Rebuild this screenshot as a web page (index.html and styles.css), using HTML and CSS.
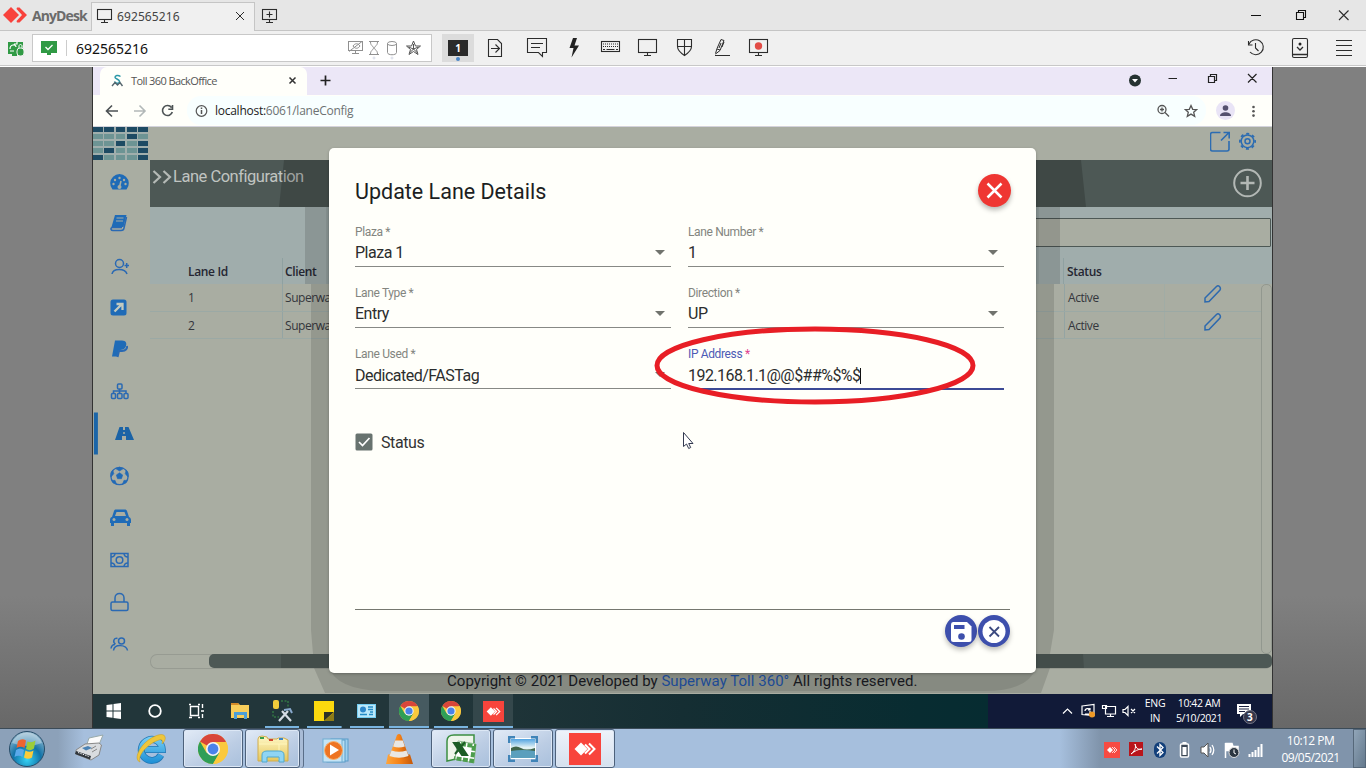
FILE: index.html
```html
<!DOCTYPE html>
<html lang="en">
<head>
<meta charset="utf-8">
<title>AnyDesk - 692565216</title>
<link rel="stylesheet" href="styles.css">
</head>
<body>
<svg class="defs" width="0" height="0" aria-hidden="true">
  <defs>
    <linearGradient id="paper" x1="0" y1="0" x2="0" y2="1"><stop offset="0" stop-color="#fff8c8"/><stop offset="1" stop-color="#e6c75b"/></linearGradient>
    <linearGradient id="sky" x1="0" y1="0" x2="0" y2="1"><stop offset="0" stop-color="#4a9fe0"/><stop offset=".45" stop-color="#e4f3f5"/><stop offset="1" stop-color="#c2dfe6"/></linearGradient>
    <radialGradient id="orb" cx=".5" cy=".8" r=".8"><stop offset="0" stop-color="#35d3f5"/><stop offset=".5" stop-color="#1173a8"/><stop offset="1" stop-color="#9fbfd2"/></radialGradient>
    <linearGradient id="ie" gradientUnits="userSpaceOnUse" x1="0" y1="734" x2="0" y2="762"><stop offset="0" stop-color="#7fd4f7"/><stop offset="1" stop-color="#1d8fd6"/></linearGradient>
    <linearGradient id="cone" x1="0" x2="1"><stop offset="0" stop-color="#ffa63c"/><stop offset=".5" stop-color="#f58218"/><stop offset="1" stop-color="#c4580a"/></linearGradient>
    <symbol id="chrome" viewBox="0 0 30 30">
      <circle cx="15" cy="15" r="15" fill="#fbc93d"/>
      <path d="M15 15 L2 7.5 A15 15 0 0 1 28 7.5 Z" fill="#d8453a"/>
      <path d="M2 7.5 A15 15 0 0 0 15 30 L21.5 18.7 L8.5 18.7 Z" fill="#2f9e57"/>
      <path d="M15 8 H28.2 A15 15 0 0 1 15 30 L21.5 18.7 Z" fill="#fbc93d"/>
      <circle cx="15" cy="15" r="7" fill="#f4f4f4"/><circle cx="15" cy="15" r="5.4" fill="#4a82ea"/>
    </symbol>
    <symbol id="adesk" viewBox="0 0 32 32">
      <rect width="32" height="32" fill="#f8443c"/>
      <path d="M5.500 16 L12 9.500 L18.500 16 L12 22.500Z" fill="#fff"/>
      <path d="M16 11.500 L20.500 16 L16 20.500 M20 10.500 L25.500 16 L20 21.500" fill="none" stroke="#fff" stroke-width="2"/>
    </symbol>
  </defs>
</svg>

<header class="titlebar">
  <div class="brand">
    <svg width="28" height="30" viewBox="0 0 28 30"><path d="M3 15 L11 7 L19 15 L11 23Z" fill="#f8423c"/><path d="M17 7.500 L19.500 7.500 L27 15 L19.500 22.500 L17 22.500 L16.500 21 L22 15 L16.500 9Z" fill="#f8423c"/></svg>
    <b>AnyDesk</b>
  </div>
  <div class="desk-tab">
    <svg width="25" height="28" viewBox="92 3 25 28" class="ln"><rect x="97.500" y="9.500" width="14" height="10"/><path d="M104.500 20v2M101 22.500h7"/></svg>
    <span>692565216</span>
    <svg width="14" height="28" viewBox="233 3 14 28" class="ln thin"><path d="M236 12l8 8M244 12l-8 8"/></svg>
  </div>
  <svg width="30" height="30" viewBox="255 0 30 30" class="ln"><rect x="262.500" y="9.500" width="14" height="10"/><path d="M269.500 20v2M266 22.500h7M269.500 11.500v6M266.500 14.500h6"/></svg>
  <div class="push"></div>
  <svg width="126" height="30" viewBox="1240 0 126 30" class="ln"><path d="M1251 15.500h10M1296.500 12.500h7v7h-7zM1298.500 12v-1.500h7v7h-2" stroke="#111"/><path d="M1339 10.500l9.500 9.500M1348.500 10.500l-9.500 9.500"/></svg>
</header>

<div class="toolbar">
  <svg width="32" height="34" viewBox="0 31 32 34"><path d="M8 42h15v11h-6v3h-5v-2h-4z" fill="#309a45"/><path d="M10 49c0-5 6-5 6-2m-2-3h3v-2M10 51h4" fill="none" stroke="#fff" stroke-width="1.200"/><rect x="17" y="48" width="7" height="8" rx="3" fill="#309a45" stroke="#eee"/><path d="M19 48v-2c0-2 3-2 3 0v2" fill="none" stroke="#fff"/></svg>
  <div class="address">
    <svg width="43" height="26" viewBox="33 35 43 26"><path d="M41 41h16v12h-6v2h-4v-2h-6z" fill="#309a45"/><path d="M45.500 47l2.500 2.500 4.500-4.500" fill="none" stroke="#fff" stroke-width="1.300"/><path d="M66.500 40v16" stroke="#ccc"/></svg>
    <span>692565216</span>
    <div class="push"></div>
    <svg width="91" height="26" viewBox="340 35 91 26" fill="none" stroke="#909090"><rect x="348.500" y="41.500" width="14" height="9"/><path d="M355.500 51v2M352 53.500h7M349 51.500l13-10M353 46c2-3 5-3 7 0-2 3-5 3-7 0M369 41.500h10M369 54.500h10M370.500 42c0 4 3 4 3 6s-3 2-3 6M377.500 42c0 4-3 4-3 6s3 2 3 6"/><ellipse cx="392" cy="43.500" rx="4.500" ry="2"/><path d="M387.500 43.500v9c0 3 9 3 9 0v-9"/><path d="M413.500 41l2 5h5l-4 3.500 1.500 5-4.500-3-4.500 3 1.500-5-4-3.500h5z M413.500 44v5l-4 4M413.500 49l4 4M413.500 49l-5-2M413.500 49l5-2" stroke="#555"/><circle cx="374" cy="58" r="1" stroke="#d8dce8"/><circle cx="392" cy="58" r="1" stroke="#d8dce8"/></svg>
  </div>
  <div class="display-btn"><b>1</b><i></i></div>
  <svg width="320" height="34" viewBox="474 31 320 34" class="ln">
    <path d="M488.500 39.500h9l4 4v13h-13zM491 48.500h8M495.500 44.500l4 4-4 4"/>
    <path d="M527.500 38.500h19v14h-4v4l-4-4h-11zM531 43.500h12M531 47.500h9"/>
    <path d="M573 38h4l-2.500 7.500h4.500l-7.500 12 2-9.500h-4z" fill="#222" stroke="none"/>
    <rect x="601.500" y="41.500" width="18" height="10"/><path d="M603 44h15M603 46.500h15" stroke-dasharray="1 1"/><path d="M603 49.500h2M606.500 49.500h8M616 49.500h2"/>
    <rect x="638.500" y="39.500" width="18" height="13"/><path d="M647.500 53v2M644 55.500h7"/>
    <path d="M677.500 39.500h14v7c0 4-4 7-7 9-3-2-7-5-7-9zM684.500 40v15M678 46.500h13"/>
    <path d="M715.500 53.500l1.500-5 4-9 3 1-4 10-4.500 3.500M717 49l3 1M721 43l-2 5M724 42l-2 5M715 55.500h15" stroke-width="1"/>
    <rect x="749.500" y="39.500" width="18" height="13"/><path d="M758.500 53v2M755 55.500h7"/><circle cx="758.500" cy="46" r="3.700" fill="#e24c46" stroke="none"/>
  </svg>
  <div class="push"></div>
  <svg width="126" height="34" viewBox="1240 31 126 34" class="ln">
    <path d="M1249 44a7.500 7.500 0 1 1 1 8M1248.500 41v4h4M1255.500 43v5l3 3"/>
    <rect x="1292.500" y="38.500" width="15" height="19" rx="1.500"/><path d="M1293 54.500h15M1297 47l3 3 3-3" stroke-width="1.300"/><circle cx="1300" cy="44" r="1.500" fill="#222" stroke="none"/>
    <path d="M1336 40.500h16M1336 45.500h16M1336 50.500h16M1336 55.500h16"/>
  </svg>
</div>

<main class="stage">
  <div class="remote">
    <div class="tabs">
      <div class="tab">
        <svg width="31" height="28" viewBox="100 67 31 28" fill="none"><path d="M120.500 76.500c-2.500-2-5.500-1-5.500.800s4.500 1.700 4.500 4.200-4 2-5 0" stroke="#2b98a8" stroke-width="1.500"/><path d="M112 86l3-3.500 2.500 2.500 2.500-2.500 2.500 3.500" stroke="#54656d" stroke-width="1.400"/></svg>
        <span>Toll 360 BackOffice</span>
        <svg width="20" height="28" viewBox="283 67 20 28" fill="none" stroke="#333" stroke-width="1.500"><path d="M289.500 77.500l6 6M295.500 77.500l-6 6"/></svg>
      </div>
      <svg width="40" height="28" viewBox="307 67 40 28" fill="none" stroke="#222" stroke-width="1.700"><path d="M320.500 80.500h10M325.500 75.500v10"/></svg>
      <div class="push"></div>
      <svg width="152" height="28" viewBox="1120 67 152 28" fill="none" stroke="#222" stroke-width="1.200"><circle cx="1135" cy="80.500" r="6" fill="#263332" stroke="none"/><path d="M1132 79h6l-3 3.500z" fill="#fff" stroke="none"/><path d="M1168.500 78.500h8.500M1208.500 76.500h6v6h-6zM1210.500 76v-1.500h6v6h-2M1248 74l8.500 8.500M1256.500 74l-8.500 8.500"/></svg>
    </div>
    <div class="urlbar">
      <svg width="94" height="31" viewBox="93 95 94 31" fill="none" stroke="#4c5254" stroke-width="1.600"><path d="M118 111h-11M112 105.500l-5.500 5.500 5.500 5.500"/><path d="M134 111h11M139.500 105.500l5.500 5.500-5.500 5.500" stroke="#b2b8b8"/><path d="M171.500 107.500a5 5 0 1 0 .800 4.500M172.500 105v4.200h-4.200"/></svg>
      <div class="omnibox">
        <svg width="28" height="29" viewBox="187 96 28 29" fill="none" stroke="#555" stroke-width="1.200"><circle cx="201.500" cy="111" r="5.300"/><path d="M201.500 110v4M201.500 107.500v1.500" stroke-width="1.500"/></svg>
        <span>localhost:<em>6061/laneConfig</em></span>
        <div class="push"></div>
        <svg width="59" height="29" viewBox="1147 96 59 29" fill="none" stroke="#555" stroke-width="1.300"><circle cx="1162" cy="109.500" r="4"/><path d="M1165 112.500l4 4M1160 109.500h4M1162 107.500v4M1191 105.500l1.700 3.800 4 .300-3 2.700 1 4-3.700-2.200-3.700 2.200 1-4-3-2.700 4-.300z"/></svg>
      </div>
      <svg width="66" height="31" viewBox="1206 95 66 31"><circle cx="1225.500" cy="110.500" r="9.500" fill="#e9e4f6"/><circle cx="1225.500" cy="108" r="2.800" fill="#55516f"/><path d="M1220 116c0-5 11-5 11 0z" fill="#55516f"/><g fill="#555"><circle cx="1253.500" cy="107" r="1.300"/><circle cx="1253.500" cy="111.300" r="1.300"/><circle cx="1253.500" cy="115.600" r="1.300"/></g></svg>
    </div>

    <div class="app">
      <nav class="side">
        <div class="mosaic">
          <i class="d"></i><i class="d"></i><i class="d"></i><i class="d"></i><i class="d"></i>
          <i></i><i></i><i></i><i class="d"></i><i></i>
          <i></i><i></i><i class="d"></i><i></i><i class="d"></i>
          <i></i><i class="d"></i><i></i><i></i><i class="d"></i>
          <i class="d"></i><i></i><i></i><i></i><i class="d"></i>
        </div>
        <svg width="57" height="534" viewBox="93 160 57 534" fill="none" stroke="#2a69b3" stroke-width="1.500">
          <path d="M112.500 189.500a9.300 9.300 0 1 1 14 0z" fill="#1f6bb7" stroke="none"/><g fill="#a9ada2" stroke="none"><circle cx="113.500" cy="184" r="1.200"/><circle cx="115" cy="180" r="1.200"/><circle cx="119.500" cy="178" r="1.200"/><circle cx="124" cy="180" r="1.200"/><circle cx="125.500" cy="184" r="1.200"/><circle cx="119.500" cy="187" r="2"/></g><path d="M119.500 187l1.500-6" stroke="#a9ada2"/>
          <path d="M115 215h11.500l-3 12h-12z" fill="#1f6bb7" stroke="none"/><path d="M126.500 217l-2.500 11c-.200 2-2 2.500-3 2.500h-8c-2 0-3-2-1-3h10"/><path d="M116.500 218h7M116 221h7" stroke="#a9ada2" stroke-width="1"/>
          <circle cx="119.500" cy="263.500" r="4"/><path d="M112 274c1-6 13-6 15 0M124.500 265.500h4.500M126.700 263v5"/>
          <rect x="110.500" y="299.500" width="16" height="16" rx="2.500" fill="#1f6bb7" stroke="none"/><path d="M114.500 311.500l7-7M116.500 304h6v6" stroke="#c3cabf" stroke-width="2.300"/>
          <path d="M115 340.500h7c4 0 5 3 4 5.500-1 3-3 4-7 4l-1 6.500h-6z" fill="#1f6bb7" stroke="none"/><path d="M117.500 357l1.500-6h3c4 0 5.500-3 5-5" stroke-width="2"/>
          <rect x="117.500" y="384" width="4.500" height="5" rx="1"/><rect x="111.500" y="393.500" width="4" height="5" rx="1"/><rect x="117.500" y="393.500" width="4.500" height="5" rx="1"/><rect x="124" y="393.500" width="4" height="5" rx="1"/><path d="M119.500 389v5M113.500 393v-2h12.500v2"/>
          <path d="M95.900 412.500v42" stroke="#1b65a8" stroke-width="4"/>
          <path d="M119.500 427h3.500v3h2v-3h3.500l5.500 13h-8v-4h-4v4h-7z" fill="#1b63a6" stroke="none"/><path d="M124 432v2" stroke="#a9ada2"/>
          <circle cx="119.500" cy="476" r="8.700" stroke-width="1.300"/>
          <path d="M119.500 472.700l3.200 2.300-1.200 3.700h-4l-1.200-3.700zM115.500 468.500l4 2.500 4-2.500-4-1.300zM111 477l2.800-3.300-1-3.700-1.500 2zM128 477l-2.800-3.300 1-3.700 1.500 2zM116.700 484.500l-1.700-4.200-3.500.2 1.500 2.500zM122.300 484.500l1.700-4.200 3.500.2-1.500 2.500z" fill="#1f6bb7" stroke-width=".6"/>
          <path d="M112 517l2-6c.500-1.500 1-1.500 2-1.500h9c1 0 1.500.500 2 1.500l2 6c2 1 2 2 2 4v2h-1v3h-3v-3h-13v3h-3v-3h-1v-3c0-2 1-3 2-3z" fill="#1f6bb7" stroke="none"/><path d="M115 516l1.500-4h8l1.500 4z" fill="#a9ada2" stroke="none"/><g fill="#a9ada2" stroke="none"><circle cx="114" cy="519.500" r="1.500"/><circle cx="127" cy="519.500" r="1.500"/></g>
          <rect x="111" y="553.500" width="17" height="13"/><circle cx="119.500" cy="560" r="3.300"/><path d="M111 557c3 0 4-1 4-4M128 557c-3 0-4-1-4-4M111 563c3 0 4 1 4 4M128 563c-3 0-4 1-4 4"/>
          <rect x="111" y="602" width="17" height="8.500" rx="1.500"/><path d="M115 602v-4c0-6 9-6 9 0v4"/>
          <circle cx="121.500" cy="641" r="3"/><path d="M113.500 650.500c1-7 13-6 14 0M117.500 638.500c-4-1-5 4-2 5.500M111 648.500c.500-3 2-4 4-4"/>
        </svg>
      </nav>
      <section class="content">
        <div class="apphead">
          <svg width="62" height="33" viewBox="1210 127 62 33" fill="none" stroke="#2c6cb2" stroke-width="1.600"><path d="M1220.500 132.500h-8c-1.500 0-2 1-2 2v14.500c0 1.500 1 2 2 2h14.500c1.500 0 2-1 2-2v-8M1221 140.500l8-8M1223.500 132.500h5.700v6"/><circle cx="1247.500" cy="141.300" r="6.300" stroke-width="1.400"/><circle cx="1247.500" cy="141.300" r="7.600" stroke-width="1.800" stroke-dasharray="2.984 2.984" stroke-dashoffset="1.500"/><circle cx="1247.500" cy="141.300" r="2.500" stroke-width="1.500"/></svg>
        </div>
        <div class="pagebar">
          <svg width="23" height="47" viewBox="150 160 23 47" fill="none" stroke="#b5bab6" stroke-width="2.200"><path d="M153.500 171l6.500 6-6.500 6M163.500 171l6.500 6-6.500 6"/></svg>
          <h1>Lane Configuration</h1>
          <div class="push"></div>
          <svg width="50" height="47" viewBox="1222 160 50 47" fill="none" stroke="#b3b8b5" stroke-width="2"><circle cx="1247.500" cy="183" r="13.300"/><path d="M1240.500 183h14M1247.500 176v14" stroke-width="2.600"/></svg>
        </div>
        <div class="filter"><div class="search"></div></div>
        <div class="thead"><span>Lane Id</span><span>Client</span><span>Status</span></div>
        <div class="tbody">
          <div class="rows">
            <div class="row"><span>1</span><span>Superway</span><span>Active</span><svg width="20" height="20" viewBox="0 0 20 20"><path d="M2 18v-4L13.500 2.500q1.500-1.500 3 0t.500 3.500L6 17.500z"/></svg></div>
            <div class="row"><span>2</span><span>Superway</span><span>Active</span><svg width="20" height="20" viewBox="0 0 20 20"><path d="M2 18v-4L13.500 2.500q1.500-1.500 3 0t.500 3.500L6 17.500z"/></svg></div>
          </div>
          <div class="vscroll"></div>
        </div>
        <div class="hscroll"><i></i></div>
      </section>

      <svg class="shade" width="1179" height="567" viewBox="93 127 1179 567">
        <path d="M284 160H1081L1086 207H279z" opacity=".18"/>
        <path d="M305 207H1060V284H305z" opacity=".13"/>
        <path d="M311 284H1054V630L1050 654H1083L1084 668H1050L1041 693H325L314 668H281V654H313L311 630z" opacity=".12"/>
        <path d="M329 668H1036Q1028 691 985 691H380Q337 689 329 668z" opacity=".09"/>
        <path d="M326 207H1039V284H326z" opacity=".05"/>
      </svg>
      <p class="copyright">Copyright © 2021 Developed by <a>Superway Toll 360°</a> All rights reserved.</p>

      <div class="modal">
        <div class="modal-head">
          <h2>Update Lane Details</h2>
          <button class="close"><svg width="33" height="33" viewBox="0 0 33 33"><path d="M9.500 9.500l14 14M23.500 9.500l-14 14" stroke="#fff" stroke-width="2.500"/></svg></button>
        </div>
        <div class="form">
          <div class="field"><label>Plaza *</label><div class="val">Plaza 1<i class="caret"></i></div></div>
          <div class="field"><label>Lane Number *</label><div class="val">1<i class="caret"></i></div></div>
          <div class="field"><label>Lane Type *</label><div class="val">Entry<i class="caret"></i></div></div>
          <div class="field"><label>Direction *</label><div class="val">UP<i class="caret"></i></div></div>
          <div class="field"><label>Lane Used *</label><div class="val"><span class="clip">Dedicated/FASTag</span><i class="caret"></i></div></div>
          <div class="field focus"><label>IP Address <em>*</em></label><div class="val"><span class="clip ip">192.168.1.1@@$##%$%$</span><i class="cursor"></i></div></div>
        </div>
        <div class="check"><svg width="18" height="18" viewBox="0 0 18 18"><rect x=".5" y=".5" width="17" height="17" rx="1.500" fill="#68736f"/><path d="M4 9l3.500 3.500L14.500 5" fill="none" stroke="#fff" stroke-width="1.700"/></svg><span>Status</span></div>
        <div class="modal-foot">
          <button><svg width="32" height="32" viewBox="945 615 32 32"><path d="M953 622h14l4.500 4.500v13q0 2.500-2.500 2.500h-15.500q-2.500 0-2.500-2.500V624.500q0-2.500 2-2.500z" fill="#fff"/><rect x="954" y="625" width="10.500" height="4" fill="#3d4fac"/><circle cx="961.500" cy="636.500" r="3.300" fill="#3d4fac"/></svg></button>
          <button><svg width="32" height="32" viewBox="978 615 32 32"><circle cx="994" cy="631.500" r="11.500" fill="#fff"/><path d="M989.500 627l9.500 9.500M999 627l-9.500 9.500" stroke="#3c4a80" stroke-width="1.800"/></svg></button>
        </div>
      </div>
      <svg class="marker" width="330" height="90" viewBox="650 320 330 90"><ellipse cx="815" cy="365.500" rx="158" ry="36.500" fill="none" stroke="#e81e25" stroke-width="5"/></svg>
      <svg class="pointer" width="14" height="20" viewBox="682 431 14 20"><path d="M683.500 432.500v14l3-2.500 2.200 4.500 2-1-2-4h4.300z" fill="#fff" stroke="#333a50"/></svg>
    </div>

    <div class="win10">
      <svg width="126" height="34" viewBox="93 694 126 34" fill="none" stroke="#fff"><path d="M106.500 705l6-.800v6.300h-6zM113.500 704l7.500-1v7.500h-7.500zM106.500 711.500h6v6.300l-6-.800zM113.500 711.500h7.500v7.500l-7.500-1z" fill="#fff" stroke="none"/><circle cx="155" cy="711" r="5.800" stroke-width="1.800"/><path d="M190.500 706.500h8v9h-8zM189 704.500h2M198 704.500h2M189 717.500h3M198 717.500h2M202.500 704v4M202.500 714v4M201 711h3" stroke-width="1.400"/></svg>
      <div class="app10"><svg width="20" height="18" viewBox="0 0 20 18"><path d="M1 1h7l2 2h9v13H1z" fill="#f7ce5b"/><path d="M1 1h7l1 2H1z" fill="#d38b28"/><path d="M4 17V10h13v7h-3v-4H7v4z" fill="#4b9fd8"/></svg></div>
      <div class="app10 run"><svg width="22" height="22" viewBox="0 0 22 22"><rect x="2" y="0" width="6" height="9" rx="2" fill="#f2cc3b"/><path d="M2 11v6h6M10 1h7v7" fill="none" stroke="#3a9448" stroke-dasharray="2 1.500"/><path d="M8 21l9-10M11 11l9 10" stroke="#d5dce4" stroke-width="2.200"/><path d="M13 10l6-1 2 4" stroke="#88a9cd" stroke-width="2" fill="none"/></svg></div>
      <div class="app10 run"><svg width="20" height="20" viewBox="0 0 20 20"><path d="M0 0h20v20H0z" fill="#fcd90e"/><path d="M10 20v-9h10z" fill="#2c3026"/><path d="M20 11v9H10z" fill="#8d7b17"/></svg></div>
      <div class="app10 run"><svg width="19" height="14" viewBox="0 0 19 14"><path d="M0 0h19v14H0z" fill="#74cdf2"/><path d="M1 1h17v12H1z" fill="#bbe8fa"/><circle cx="6" cy="5.500" r="3" fill="#2d86c9"/><path d="M11 3h5M11 5.500h5M3 10.500h7M12 10.500h4M13 8h3" stroke="#258bc5" stroke-width="1.500"/></svg></div>
      <div class="app10 run hot"><svg width="20" height="20"><use href="#chrome"/></svg></div>
      <div class="app10 run"><svg width="20" height="20"><use href="#chrome"/></svg></div>
      <div class="app10 run warm"><svg width="21" height="21"><use href="#adesk"/></svg></div>
      <div class="push"></div>
      <svg width="85" height="34" viewBox="1058 694 85 34" fill="none" stroke="#fff" stroke-width="1.200"><path d="M1063 713.500l4.500-4.500 4.500 4.500M1082 706l12-1.500v11l-12-1zM1085 711c0-3 5-3 5-1m0-2v2h-2M1090 711v3h-5M1105.500 706.500h10v7.500h-10zM1110.500 714v2.500M1107 716.500h7M1102.500 705.500h4v3h-4zM1123 709.500h2l3-3v9l-3-3h-2zM1131 709l4 4M1135 709l-4 4"/><circle cx="1092" cy="714.500" r="3" fill="#f09a26" stroke="none"/></svg>
      <div class="duo lang"><span>ENG</span><span>IN</span></div>
      <div class="duo clock10"><span>10:42 AM</span><span>5/10/2021</span></div>
      <div class="note"><svg width="24" height="22" viewBox="1236 702 24 22"><path d="M1237 704h14v10h-8l-3 3v-3h-3z" fill="#fff"/><path d="M1239 706.500h10M1239 709h10M1239 711.500h6" stroke="#1b2140"/><circle cx="1250" cy="717" r="6.500" fill="#35364a" stroke="#767888"/></svg><b>3</b></div>
    </div>
  </div>
</main>

<footer class="win7">
  <svg width="183" height="40" viewBox="0 728 183 40">
    <circle cx="27" cy="748" r="17.500" fill="url(#orb)" stroke="#274c68"/><path d="M12 742a16 16 0 0 1 30 0q-15 6-30 0z" fill="#fff" opacity=".35"/>
    <path d="M18 740q4-3 8-.500l-1.500 7.500q-4-2.500-8 0z" fill="#ee6430"/><path d="M27.500 740.500q4 2 8-1l-1.500 8q-4 3-8 .500z" fill="#9bcd3a"/><path d="M16 749q4-3 8 0l-1.500 7q-4-2.500-8 0z" fill="#5aa9ea"/><path d="M25.500 749.500q4 2.500 8 0l-1.500 7q-4 2.500-8 0z" fill="#fbcc3a"/>
    <path d="M89 737l14-3-5 12-12 0z" fill="#fbfbfb" stroke="#9aa"/><path d="M76 749l9-6 14-1 2.500 2-2.500 10-8 5-15-6z" fill="#d9dcdf" stroke="#888"/><path d="M75 753l15 5.500 1-3.500-15-5z" fill="#30363c"/><path d="M78 751.500l11 4" stroke="#eee" stroke-dasharray="1.500 1"/><path d="M82 747l6-2 4 2-6 2.500z" fill="#4b83b5"/><path d="M91 748l5-3M92 751l5-3" stroke="#888"/>
    <path d="M161 754A10.500 10.500 0 1 1 162.300 748.500H145" fill="none" stroke="#2277b4" stroke-width="7"/><path d="M161 754A10.500 10.500 0 1 1 162.300 748.500H145" fill="none" stroke="url(#ie)" stroke-width="5.500"/><path d="M140 761c-6-2-2-13 6-20 8-7 18-10 19-5 1 2-1 5-3 7 1-4 0-5-3-4-10 3-22 15-19 22z" fill="#eec63b" stroke="#c99b1e" stroke-width=".5"/>
  </svg>
  <div class="b7 w59"><svg width="30" height="30"><use href="#chrome"/></svg></div>
  <div class="b7 w55 stack"><svg width="32" height="30" viewBox="0 0 32 30"><path d="M1 5q0-3 4-3l5 1 1 2h9l1-1h6l4 2v21H1z" fill="url(#paper)" stroke="#d1ad4c"/><path d="M3 4h4" stroke="#3a9f4a" stroke-width="2"/><path d="M12 6h4" stroke="#d2462e" stroke-width="2"/><path d="M22 5h4" stroke="#3c87c9" stroke-width="2"/><path d="M2 10h28M22 10v16" stroke="#fff6bb"/><path d="M5 28V21q0-4 5-4h12q5 0 5 4v7h-5v-5H10v5z" fill="#8fd5f4" stroke="#4fa8cf"/></svg></div>
  <svg width="129" height="40" viewBox="302 728 129 40">
    <rect x="331" y="738" width="17" height="22" fill="#9fd0ee" stroke="#5a9cc8"/><rect x="327" y="739" width="18" height="22" fill="#b7def2" stroke="#5a9cc8"/><rect x="323" y="738" width="19" height="23" fill="#c5e4f5" stroke="#70add2"/><circle cx="333.500" cy="749.500" r="9" fill="#ee7422" stroke="#f8b06c"/><path d="M330 743.500v11l9-5.500z" fill="#fff"/>
    <path d="M388 753.500h22l3 9.500h-27z" fill="url(#cone)"/><path d="M397 734q2-2 4 0l8 22q-10 4-20 0z" fill="url(#cone)"/><path d="M395.200 739.500h7.600l2 6q-6 2-11.700 0zM391.500 749.500q7.500 2.500 15 0l2 5.500q-9.500 3.500-19 0z" fill="#e9e7e3"/>
  </svg>
  <div class="b7 w59"><svg width="31" height="30" viewBox="0 0 31 30"><path d="M1 27V7Q1 1 8 1h20v20z" fill="#eef5ea" stroke="#3c8f42" stroke-width="1.500"/><path d="M12 7l18 3-2 19-19-4z" fill="#fff" stroke="#90b892"/><path d="M15 10l13 2-2 15-18-3" fill="none" stroke="#4c9d4d" stroke-width="4" stroke-dasharray="5 1.500"/><path d="M8 9h5l8 12h-5zM19 8l-10 12" fill="#1c5d26" stroke="#1c5d26" stroke-width="2"/></svg></div>
  <div class="b7 w59 gap"><svg width="30" height="26" viewBox="0 0 30 26"><rect x="2.500" y="2.500" width="25" height="20" fill="url(#sky)" stroke="#fff"/><path d="M3 12q5-3 10 0t14 0v4H3z" fill="#41664c"/><path d="M3 15q12-2 24 0v7H3z" fill="#5b9fbd"/><path d="M1 7V1h6M23 1h6v6M29 19v6h-6M7 25H1v-6" fill="none" stroke="#4084b8" stroke-width="3"/></svg></div>
  <div class="b7 w59 gap lit"><svg width="32" height="32"><use href="#adesk"/></svg></div>
  <div class="push"></div>
  <svg width="176" height="40" viewBox="1100 728 176 40">
    <rect x="1104" y="741" width="16" height="16" fill="#f64b43"/><path d="M1107 749l3-3 3 3-3 3z" fill="#fff"/><path d="M1112 746l3 3-3 3M1114 746l3 3-3 3" fill="none" stroke="#fff" stroke-width=".800"/>
    <rect x="1129" y="741" width="14" height="14" fill="#b9151b"/><path d="M1131 753c5-4 5-8 4-10 1 5 4 6 7 5-4 0-7 2-11 5" fill="none" stroke="#fff"/>
    <rect x="1154" y="741" width="12" height="16" rx="6" fill="#123f7a"/><path d="M1157 745.500l6 6-3 3v-11l3 3-6 6" fill="none" stroke="#fff" stroke-width="1.300"/>
    <rect x="1180.500" y="743" width="8" height="13" rx="1" fill="#3c4856" stroke="#fff" stroke-width="1.500"/><path d="M1182.500 746h4v8h-4zM1182.500 741h4v2h-4z" fill="#fff"/>
    <path d="M1201 746h3l4-4v14l-4-4h-3z" fill="#fff" stroke="#555"/><path d="M1210 746q2 3 0 6M1212 744q3.500 5 0 10" fill="none" stroke="#fff" stroke-width="1.300"/>
    <path d="M1225.500 742v15M1226 742.500h6l1 3h5v6h-5l-1-2h-6z" fill="#fff" stroke="#fff" stroke-width="1.500"/><circle cx="1234" cy="751.500" r="5" fill="#2c3640" stroke="#ddd"/><path d="M1234 748.500v3.500l2 1" stroke="#fff" fill="none"/>
    <path d="M1249.500 756v-3M1252.500 756v-5M1255.500 756v-7M1258.500 756v-10M1261.500 756v-13" stroke="#fff" stroke-width="2"/>
  </svg>
  <div class="duo clock7"><span>10:12 PM</span><span>09/05/2021</span></div>
  <div class="peek"></div>
</footer>
</body>
</html>
```
FILE: styles.css
```css
* { box-sizing: border-box; }
body { margin: 0; width: 1366px; height: 768px; overflow: hidden; display: flex; flex-direction: column; font-family: "Open Sans", "Noto Sans", sans-serif; color: #222; }
svg { display: block; flex: none; }
.defs { position: absolute; }
button { border: 0; padding: 0; }
h1, h2, p { margin: 0; font-weight: 400; }
em { font-style: normal; }
.push { flex: 1; }
.ln { fill: none; stroke: #2c2c2c; stroke-width: 1.1; }
.thin { stroke-width: 1; }

.titlebar { height: 31px; flex: none; display: flex; background: #e6e6e6; border-bottom: 1px solid #c5c5c5; }
.brand { display: flex; width: 91px; }
.brand b { margin-left: 4px; font: 700 14px/32px "Open Sans", sans-serif; letter-spacing: -.9px; color: #6b6b6b; }
.desk-tab { width: 164px; height: 29px; margin-top: 2px; display: flex; justify-content: space-between; padding-right: 7px; background: #f0f0f0; border: 1px solid #c5c5c5; border-bottom: 0; z-index: 1; }
.desk-tab span { font: 12px/27px "Noto Sans", sans-serif; color: #444; flex: 1; letter-spacing: .1px; }
.toolbar { height: 36px; flex: none; display: flex; background: #f0f0f0; border-bottom: 1px solid #fff; box-shadow: inset 0 -1px #c8c8c8; }
.address { width: 400px; height: 28px; margin-top: 3px; display: flex; background: #fff; border: 1px solid #c8c8c8; }
.address span { font: 14px/27px "Noto Sans", sans-serif; color: #111; }
.display-btn { margin: 3px 0 0 10px; width: 32px; height: 28px; background: #dcdcdc; display: flex; flex-direction: column; align-items: center; padding-top: 6px; gap: 1px; }
.display-btn b { width: 20px; height: 16px; background: #2a2a2a; color: #fff; font: 700 10px/16px "Noto Sans", sans-serif; text-align: center; }
.display-btn i { width: 4px; height: 4px; border-radius: 2px; background: #4a86c8; }

.stage { height: 661px; flex: none; padding: 0 93px 0 92px; background: linear-gradient(#808080 0 80%, #686868); }
.remote { width: 1181px; height: 661px; border: solid #333; border-width: 0 1px; display: flex; flex-direction: column; background: #fffffa; }
.tabs { height: 28px; display: flex; background: #ece7f7; padding-left: 7px; }
.tab { width: 207px; display: flex; background: #fffffa; border-radius: 7px 7px 0 0; padding-right: 4px; }
.tab span { flex: 1; font: 11px/27px "Open Sans", sans-serif; letter-spacing: -.6px; color: #555; white-space: nowrap; }
.urlbar { height: 32px; display: flex; border-bottom: 1px solid #d3d3dc; }
.omnibox { width: 1019px; height: 29px; margin-top: 1px; display: flex; background: #f8ffff; border-radius: 14px; }
.omnibox span { font: 12px/30px "Open Sans", sans-serif; color: #222; letter-spacing: -.26px; }
.omnibox em { color: #6d7272; }

.app { position: relative; height: 567px; display: flex; background: #a9ada2; }
.side { width: 57px; }
.mosaic { width: 55px; height: 33px; display: grid; grid-template-columns: repeat(5, 1fr); grid-template-rows: repeat(5, 1fr); gap: 1.5px; background: #a0aeac; overflow: hidden; }
.mosaic i { background: #6d9494; }
.mosaic .d { background: #1d4a63; }
.content { width: 1122px; display: flex; flex-direction: column; }
.apphead { height: 33px; display: flex; justify-content: flex-end; }
.pagebar { height: 47px; display: flex; background: #4d5855; }
.pagebar h1 { font: 16.5px/33px Roboto, sans-serif; letter-spacing: -.48px; color: #c0c4c1; }
.filter { height: 51px; padding: 11px 1px 0 300px; background: #a0adac; }
.search { height: 29px; border: 1px solid #4d5855; border-radius: 1px; background: #a9ada2; }
.thead { height: 26px; display: grid; grid-template-columns: 97px 782px 1fr; padding-left: 38px; background: linear-gradient(90deg, transparent 132px, #8fa1a1 132px 133px, transparent 133px 913px, #8fa1a1 913px 914px, transparent 914px), #a0adac; font: 600 12px/28px "Open Sans", sans-serif; letter-spacing: -.35px; color: #252632; }
.tbody { height: 370px; display: flex; }
.rows { width: 1111px; }
.row { height: 27.500px; display: grid; grid-template-columns: 97px 783px 135px 20px; padding-left: 38px; border-bottom: 1px solid #9ba9a5; font: 12px/27px "Open Sans", sans-serif; letter-spacing: -.45px; color: #34363c; background: linear-gradient(90deg, transparent 132px, #94a4a3 132px 133px, transparent 133px 914px, #94a4a3 914px 915px, transparent 915px 1014px, #a1aca5 1014px 1015px, transparent 1015px); }
.row svg { fill: none; stroke: #2d69ae; stroke-width: 1.500; }
.vscroll { width: 11px; border: 1px solid #92988f; border-radius: 5px; }
.hscroll { height: 15px; padding-left: 58px; border: 1px solid #979b92; border-right: 0; border-radius: 7px; margin-right: 0; }
.hscroll i { display: block; height: 14px; margin-top: -1px; background: #4d5855; border-radius: 5px; }
.shade { position: absolute; left: 0; top: 0; fill: #000; }
.copyright { position: absolute; left: 354px; top: 545px; font: 15px/18px Roboto, sans-serif; letter-spacing: .03px; color: #17181e; white-space: nowrap; }
.copyright a { color: #1d4a94; }

.modal { position: absolute; left: 236px; top: 21px; width: 707px; height: 525px; padding: 26px 26px 0; display: flex; flex-direction: column; background: #fffffa; border-radius: 5px; box-shadow: 0 1px 3px rgba(0,0,0,.25); font-family: Roboto, sans-serif; }
.modal-head { display: flex; justify-content: space-between; height: 49px; }
.modal-head h2 { font-size: 21.5px; line-height: 35px; color: #1c1e22; }
.close { width: 33px; height: 33px; border-radius: 50%; background: #ef3632; box-shadow: 0 3px 5px rgba(0,0,0,.28); margin-right: -1px; }
.form { display: grid; grid-template-columns: 316px 316px; gap: 0 17px; }
.field { height: 61px; }
.field label { display: block; height: 16px; font-size: 12px; line-height: 18px; letter-spacing: -.36px; color: #83857f; }
.val { position: relative; display: flex; align-items: center; height: 28px; border-bottom: 1px solid #878985; font-size: 16px; letter-spacing: -.5px; color: #2b2d2d; padding-right: 6px; }
.caret { margin-left: auto; border: 5px solid transparent; border-top-color: #70736d; border-bottom-width: 0; }
.clip { height: 18px; line-height: 20px; overflow: hidden; }
.ip { letter-spacing: -.55px; margin-top: -2px; }
.focus label { color: #4c5ab5; }
.focus em { color: #e0428f; }
.focus .val { border-bottom: 0; box-shadow: inset 0 -2px #3c4a95; height: 29px; }
.cursor { width: 1px; height: 16px; background: #111; }
.check { display: flex; gap: 8px; height: 176px; margin-top: 27px; font-size: 16px; line-height: 19px; letter-spacing: -.4px; color: #333; }
.modal-foot { width: 655px; border-top: 1px solid #75776f; display: flex; justify-content: flex-end; gap: 1px; padding-top: 5px; }
.modal-foot button { width: 32px; height: 32px; border-radius: 50%; background: #3d4fac; box-shadow: 0 3px 5px rgba(0,0,0,.25); }
.marker { position: absolute; left: 557px; top: 193px; }
.pointer { position: absolute; left: 589px; top: 304px; }

.win10 { height: 34px; display: flex; background: linear-gradient(90deg, #22363a 0 30%, #152e33 50%, #082c31 70%, #062c31 895px, #111a38 895px); }
.app10 { width: 42.200px; height: 34px; display: flex; align-items: center; justify-content: center; border: solid transparent; border-width: 0 4px; background-clip: padding-box; }
.run { box-shadow: none; background: linear-gradient(#79b4e0, #79b4e0) center bottom / 100% 2px no-repeat padding-box; }
.hot { background-color: #465a60; border-width: 0 1px; }
.warm { background-color: #34474b; border-width: 0 1px; }
.duo { display: flex; flex-direction: column; align-items: center; color: #fff; white-space: nowrap; }
.lang { width: 24px; font: 10.500px/15px "Open Sans", sans-serif; padding-top: 2px; letter-spacing: -.3px; }
.clock10 { width: 64px; font: 10.500px/15px "Open Sans", sans-serif; padding-top: 2px; letter-spacing: -.4px; }
.note { position: relative; width: 41px; padding: 8px 0 0 5px; }
.note b { position: absolute; left: 16px; top: 15px; font: 700 10px/16px "Open Sans", sans-serif; color: #fff; }

.win7 { height: 40px; flex: none; display: flex; border-top: 1px solid #3b4b58; background: linear-gradient(90deg, #8ca1b9 0 58px, #a6bfdd 84px 1060px, #8094ab 1100px); }
.b7 { height: 39px; display: flex; align-items: center; justify-content: center; border: 1px solid #4d617b; border-radius: 3px; background: linear-gradient(150deg, #e2ebf7, #bccde4 60%, #a9c0dc); box-shadow: inset 0 0 0 1px #dce7f5; }
.w59 { width: 60px; }
.w55 { width: 55px; margin: 0 2px; }
.stack { box-shadow: inset 0 0 0 1px #dce7f5, 3px 0 #a9bcd6, 4px 0 #5a6e88; }
.gap { margin-left: 2px; }
.lit { background: linear-gradient(#eef3fa, #d5e0ee); }
.clock7 { width: 69px; margin-right: 8px; font: 12px/17px "Open Sans", sans-serif; letter-spacing: -.55px; padding-top: 3px; }
.peek { width: 13px; border: 1px solid #56687a; background: linear-gradient(110deg, #91a5b8, #64798d); }
```
